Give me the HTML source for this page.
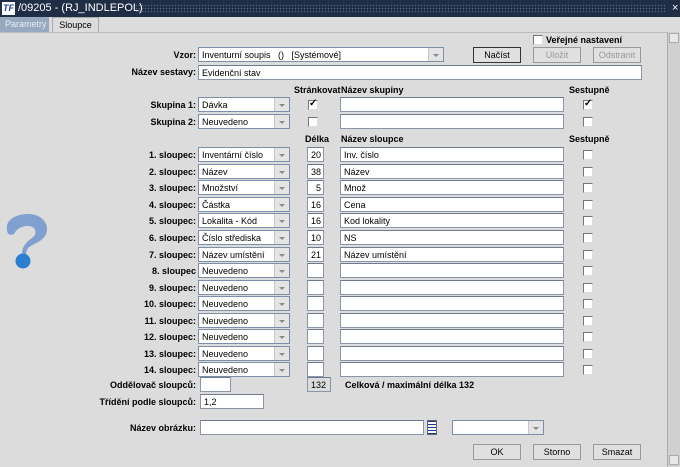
<!DOCTYPE html>
<html><head><meta charset="utf-8"><style>
*{box-sizing:border-box;margin:0;padding:0}
body{width:680px;height:467px;background:#dcdcdc;font-family:"Liberation Sans",sans-serif;font-size:9px;color:#000;position:relative;overflow:hidden}
.a{position:absolute}
.t{position:absolute;background:#1f2d45;left:0;top:0;width:680px;height:17px;color:#fff;font-size:11px;line-height:17px}
.lb{position:absolute;font-weight:bold;text-align:right;width:190px;left:6px;line-height:12px;white-space:nowrap}
.in{position:absolute;background:#fff;border:1px solid #8a95a8;border-top-color:#6f7a8e;height:15px;line-height:14px;padding-left:3px;white-space:nowrap;overflow:hidden}
.cb{position:absolute;background:#fff;border:1px solid #7b8fa8;height:15px;line-height:14px;padding-left:3px;width:92px;left:198px}
.cb:after{content:"";position:absolute;right:0;top:0;width:14px;height:13px;background:#e4e4e4;border-left:1px solid #c8c8c8}
.cb:before{content:"";position:absolute;right:4px;top:6px;border:3px solid transparent;border-top:3px solid #8a8a8a;z-index:2}
.ln{left:307px;width:17px;text-align:right;padding-right:2px}
.nm{left:340px;width:224px}
.ck{position:absolute;width:10px;height:10px;background:#fff;border:1px solid #777;border-right-color:#ddd;border-bottom-color:#ddd}
.ck.on:after{content:"✓";position:absolute;left:0;top:-3px;font-size:10px;font-weight:bold}
.bt{position:absolute;height:16px;width:48px;border:1px solid #999;background:#e0e0e0;text-align:center;line-height:14px}
.h{position:absolute;font-weight:bold;line-height:12px}
</style></head><body>
<div class="t"><span class="a" style="left:2px;top:2px;width:13px;height:13px;background:#fff;color:#2040a0;font-size:9px;font-weight:bold;font-style:italic;line-height:13px;text-align:center">TF</span><span class="a" style="left:18px">/09205 - (RJ_INDLEPOL)</span><span class="a" style="left:672px">×</span>
<div class="a" style="left:135px;top:4px;width:530px;height:9px;background-image:radial-gradient(#5a6a85 30%,transparent 40%);background-size:3px 3px"></div></div>
<div class="a" style="left:0;top:17px;width:49px;height:15px;background:#98a8be;color:#e8eef6;line-height:15px;padding-left:5px">Parametry</div>
<div class="a" style="left:52px;top:17px;width:47px;height:15px;background:#dcdcdc;border:1px solid #aaa;border-bottom:none;line-height:14px;text-align:center">Sloupce</div>
<div class="a" style="left:0;top:32px;width:668px;height:1px;background:#bbb"></div>
<div class="a" style="left:667px;top:32px;width:13px;height:435px;background:#d0d0d0;border-left:1px solid #aaa"></div>
<div class="a" style="left:669px;top:33px;width:10px;height:10px;background:#e8e8e8;border:1px solid #aaa"></div>
<div class="a" style="left:669px;top:455px;width:10px;height:10px;background:#e8e8e8;border:1px solid #aaa"></div>

<svg class="a" style="left:2px;top:208px" width="45" height="62"><path d="M5 22 C3 12 14 6 26 6 C40 6 48 16 44 26 C41 34 30 36 26 40 C24 44 24 46 24 48 L20 48 C19 40 24 34 30 30 C36 26 34 18 26 18 C18 18 14 22 12 26 C8 28 5 26 5 22 Z" fill="#7096cc" opacity=".85"/><circle cx="21" cy="53" r="7.5" fill="#2a7fd0"/></svg>

<div class="ck" style="left:533px;top:35px"></div><div class="h" style="left:546px;top:34px">Veřejné nastavení</div>
<div class="lb" style="top:49px">Vzor:</div>
<div class="cb" style="width:246px;top:47px">Inventurní soupis &nbsp; () &nbsp; [Systémové]</div>
<div class="bt" style="left:473px;top:47px;border:1px solid #333;color:#000">Načíst</div>
<div class="bt" style="left:533px;top:47px;color:#999">Uložit</div>
<div class="bt" style="left:593px;top:47px;color:#999">Odstranit</div>
<div class="lb" style="top:66px">Název sestavy:</div>
<div class="in" style="left:198px;top:65px;width:444px">Evidenční stav</div>

<div class="h" style="left:294px;top:84px">Stránkovat</div><div class="h" style="left:341px;top:84px">Název skupiny</div><div class="h" style="left:569px;top:84px">Sestupně</div>
<div class="lb" style="top:99px">Skupina 1:</div><div class="cb" style="top:97px">Dávka</div><div class="ck on" style="left:308px;top:100px"></div><div class="in nm" style="top:97px"></div><div class="ck on" style="left:583px;top:100px"></div>
<div class="lb" style="top:116px">Skupina 2:</div><div class="cb" style="top:114px">Neuvedeno</div><div class="ck" style="left:308px;top:117px"></div><div class="in nm" style="top:114px"></div><div class="ck" style="left:583px;top:117px"></div>

<div class="h" style="left:305px;top:133px">Délka</div><div class="h" style="left:341px;top:133px">Název sloupce</div><div class="h" style="left:569px;top:133px">Sestupně</div>

<div class="lb" style="top:149px">1. sloupec:</div><div class="cb" style="top:147px">Inventární číslo</div><div class="in ln" style="top:147px">20</div><div class="in nm" style="top:147px">Inv. číslo</div><div class="ck" style="left:583px;top:150px"></div>
<div class="lb" style="top:166px">2. sloupec:</div><div class="cb" style="top:164px">Název</div><div class="in ln" style="top:164px">38</div><div class="in nm" style="top:164px">Název</div><div class="ck" style="left:583px;top:167px"></div>
<div class="lb" style="top:182px">3. sloupec:</div><div class="cb" style="top:180px">Množství</div><div class="in ln" style="top:180px">5</div><div class="in nm" style="top:180px">Množ</div><div class="ck" style="left:583px;top:183px"></div>
<div class="lb" style="top:199px">4. sloupec:</div><div class="cb" style="top:197px">Částka</div><div class="in ln" style="top:197px">16</div><div class="in nm" style="top:197px">Cena</div><div class="ck" style="left:583px;top:200px"></div>
<div class="lb" style="top:215px">5. sloupec:</div><div class="cb" style="top:213px">Lokalita - Kód</div><div class="in ln" style="top:213px">16</div><div class="in nm" style="top:213px">Kod lokality</div><div class="ck" style="left:583px;top:216px"></div>
<div class="lb" style="top:232px">6. sloupec:</div><div class="cb" style="top:230px">Číslo střediska</div><div class="in ln" style="top:230px">10</div><div class="in nm" style="top:230px">NS</div><div class="ck" style="left:583px;top:233px"></div>
<div class="lb" style="top:249px">7. sloupec:</div><div class="cb" style="top:247px">Název umístění</div><div class="in ln" style="top:247px">21</div><div class="in nm" style="top:247px">Název umístění</div><div class="ck" style="left:583px;top:250px"></div>
<div class="lb" style="top:265px">8. sloupec</div><div class="cb" style="top:263px">Neuvedeno</div><div class="in ln" style="top:263px"></div><div class="in nm" style="top:263px"></div><div class="ck" style="left:583px;top:266px"></div>
<div class="lb" style="top:282px">9. sloupec:</div><div class="cb" style="top:280px">Neuvedeno</div><div class="in ln" style="top:280px"></div><div class="in nm" style="top:280px"></div><div class="ck" style="left:583px;top:283px"></div>
<div class="lb" style="top:298px">10. sloupec:</div><div class="cb" style="top:296px">Neuvedeno</div><div class="in ln" style="top:296px"></div><div class="in nm" style="top:296px"></div><div class="ck" style="left:583px;top:299px"></div>
<div class="lb" style="top:315px">11. sloupec:</div><div class="cb" style="top:313px">Neuvedeno</div><div class="in ln" style="top:313px"></div><div class="in nm" style="top:313px"></div><div class="ck" style="left:583px;top:316px"></div>
<div class="lb" style="top:331px">12. sloupec:</div><div class="cb" style="top:329px">Neuvedeno</div><div class="in ln" style="top:329px"></div><div class="in nm" style="top:329px"></div><div class="ck" style="left:583px;top:332px"></div>
<div class="lb" style="top:348px">13. sloupec:</div><div class="cb" style="top:346px">Neuvedeno</div><div class="in ln" style="top:346px"></div><div class="in nm" style="top:346px"></div><div class="ck" style="left:583px;top:349px"></div>
<div class="lb" style="top:364px">14. sloupec:</div><div class="cb" style="top:362px">Neuvedeno</div><div class="in ln" style="top:362px"></div><div class="in nm" style="top:362px"></div><div class="ck" style="left:583px;top:365px"></div>

<div class="lb" style="top:379px">Oddělovač sloupců:</div><div class="in" style="left:200px;top:377px;width:31px"></div>
<div class="in" style="left:307px;top:377px;width:24px;background:#dcdcdc">132</div>
<div class="h" style="left:345px;top:379px">Celková / maximální délka 132</div>
<div class="lb" style="top:396px">Třídění podle sloupců:</div><div class="in" style="left:200px;top:394px;width:64px">1,2</div>
<div class="lb" style="top:422px">Název obrázku:</div><div class="in" style="left:200px;top:420px;width:224px"></div>
<div class="a" style="left:427px;top:420px;width:10px;height:15px;background:repeating-linear-gradient(#1a3a9a 0 1px,#fff 1px 3px);border:1px solid #666"></div>
<div class="cb" style="left:452px;top:420px;width:92px"></div>
<div class="bt" style="left:473px;top:444px">OK</div>
<div class="bt" style="left:533px;top:444px">Storno</div>
<div class="bt" style="left:593px;top:444px">Smazat</div>
</body></html>
